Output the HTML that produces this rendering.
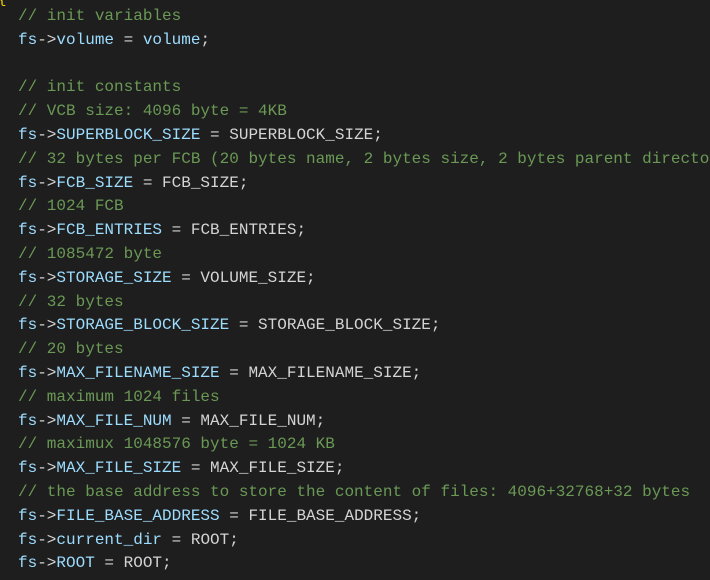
<!DOCTYPE html>
<html><head><meta charset="utf-8"><style>
html,body{margin:0;padding:0;background:#1e1e1e;width:710px;height:580px;overflow:hidden}
pre{margin:0;position:absolute;left:18px;top:5px;font-family:"Liberation Mono",monospace;font-size:16px;line-height:23.8px;color:#d4d4d4;white-space:pre}
.c{color:#6a9955}.v{color:#9cdcfe}
.b{position:absolute;left:-2px;top:-8px;color:#ffd700;font-family:"Liberation Mono",monospace;font-size:14px}
</style></head><body>
<div class="b">{</div>
<pre><span class="c">// init variables</span>
<span class="v">fs</span>-&gt;<span class="v">volume</span> = <span class="v">volume</span>;

<span class="c">// init constants</span>
<span class="c">// VCB size: 4096 byte = 4KB</span>
<span class="v">fs</span>-&gt;<span class="v">SUPERBLOCK_SIZE</span> = SUPERBLOCK_SIZE;
<span class="c">// 32 bytes per FCB (20 bytes name, 2 bytes size, 2 bytes parent directory</span>
<span class="v">fs</span>-&gt;<span class="v">FCB_SIZE</span> = FCB_SIZE;
<span class="c">// 1024 FCB</span>
<span class="v">fs</span>-&gt;<span class="v">FCB_ENTRIES</span> = FCB_ENTRIES;
<span class="c">// 1085472 byte</span>
<span class="v">fs</span>-&gt;<span class="v">STORAGE_SIZE</span> = VOLUME_SIZE;
<span class="c">// 32 bytes</span>
<span class="v">fs</span>-&gt;<span class="v">STORAGE_BLOCK_SIZE</span> = STORAGE_BLOCK_SIZE;
<span class="c">// 20 bytes</span>
<span class="v">fs</span>-&gt;<span class="v">MAX_FILENAME_SIZE</span> = MAX_FILENAME_SIZE;
<span class="c">// maximum 1024 files</span>
<span class="v">fs</span>-&gt;<span class="v">MAX_FILE_NUM</span> = MAX_FILE_NUM;
<span class="c">// maximux 1048576 byte = 1024 KB</span>
<span class="v">fs</span>-&gt;<span class="v">MAX_FILE_SIZE</span> = MAX_FILE_SIZE;
<span class="c">// the base address to store the content of files: 4096+32768+32 bytes</span>
<span class="v">fs</span>-&gt;<span class="v">FILE_BASE_ADDRESS</span> = FILE_BASE_ADDRESS;
<span class="v">fs</span>-&gt;<span class="v">current_dir</span> = ROOT;
<span class="v">fs</span>-&gt;<span class="v">ROOT</span> = ROOT;</pre>
</body></html>
